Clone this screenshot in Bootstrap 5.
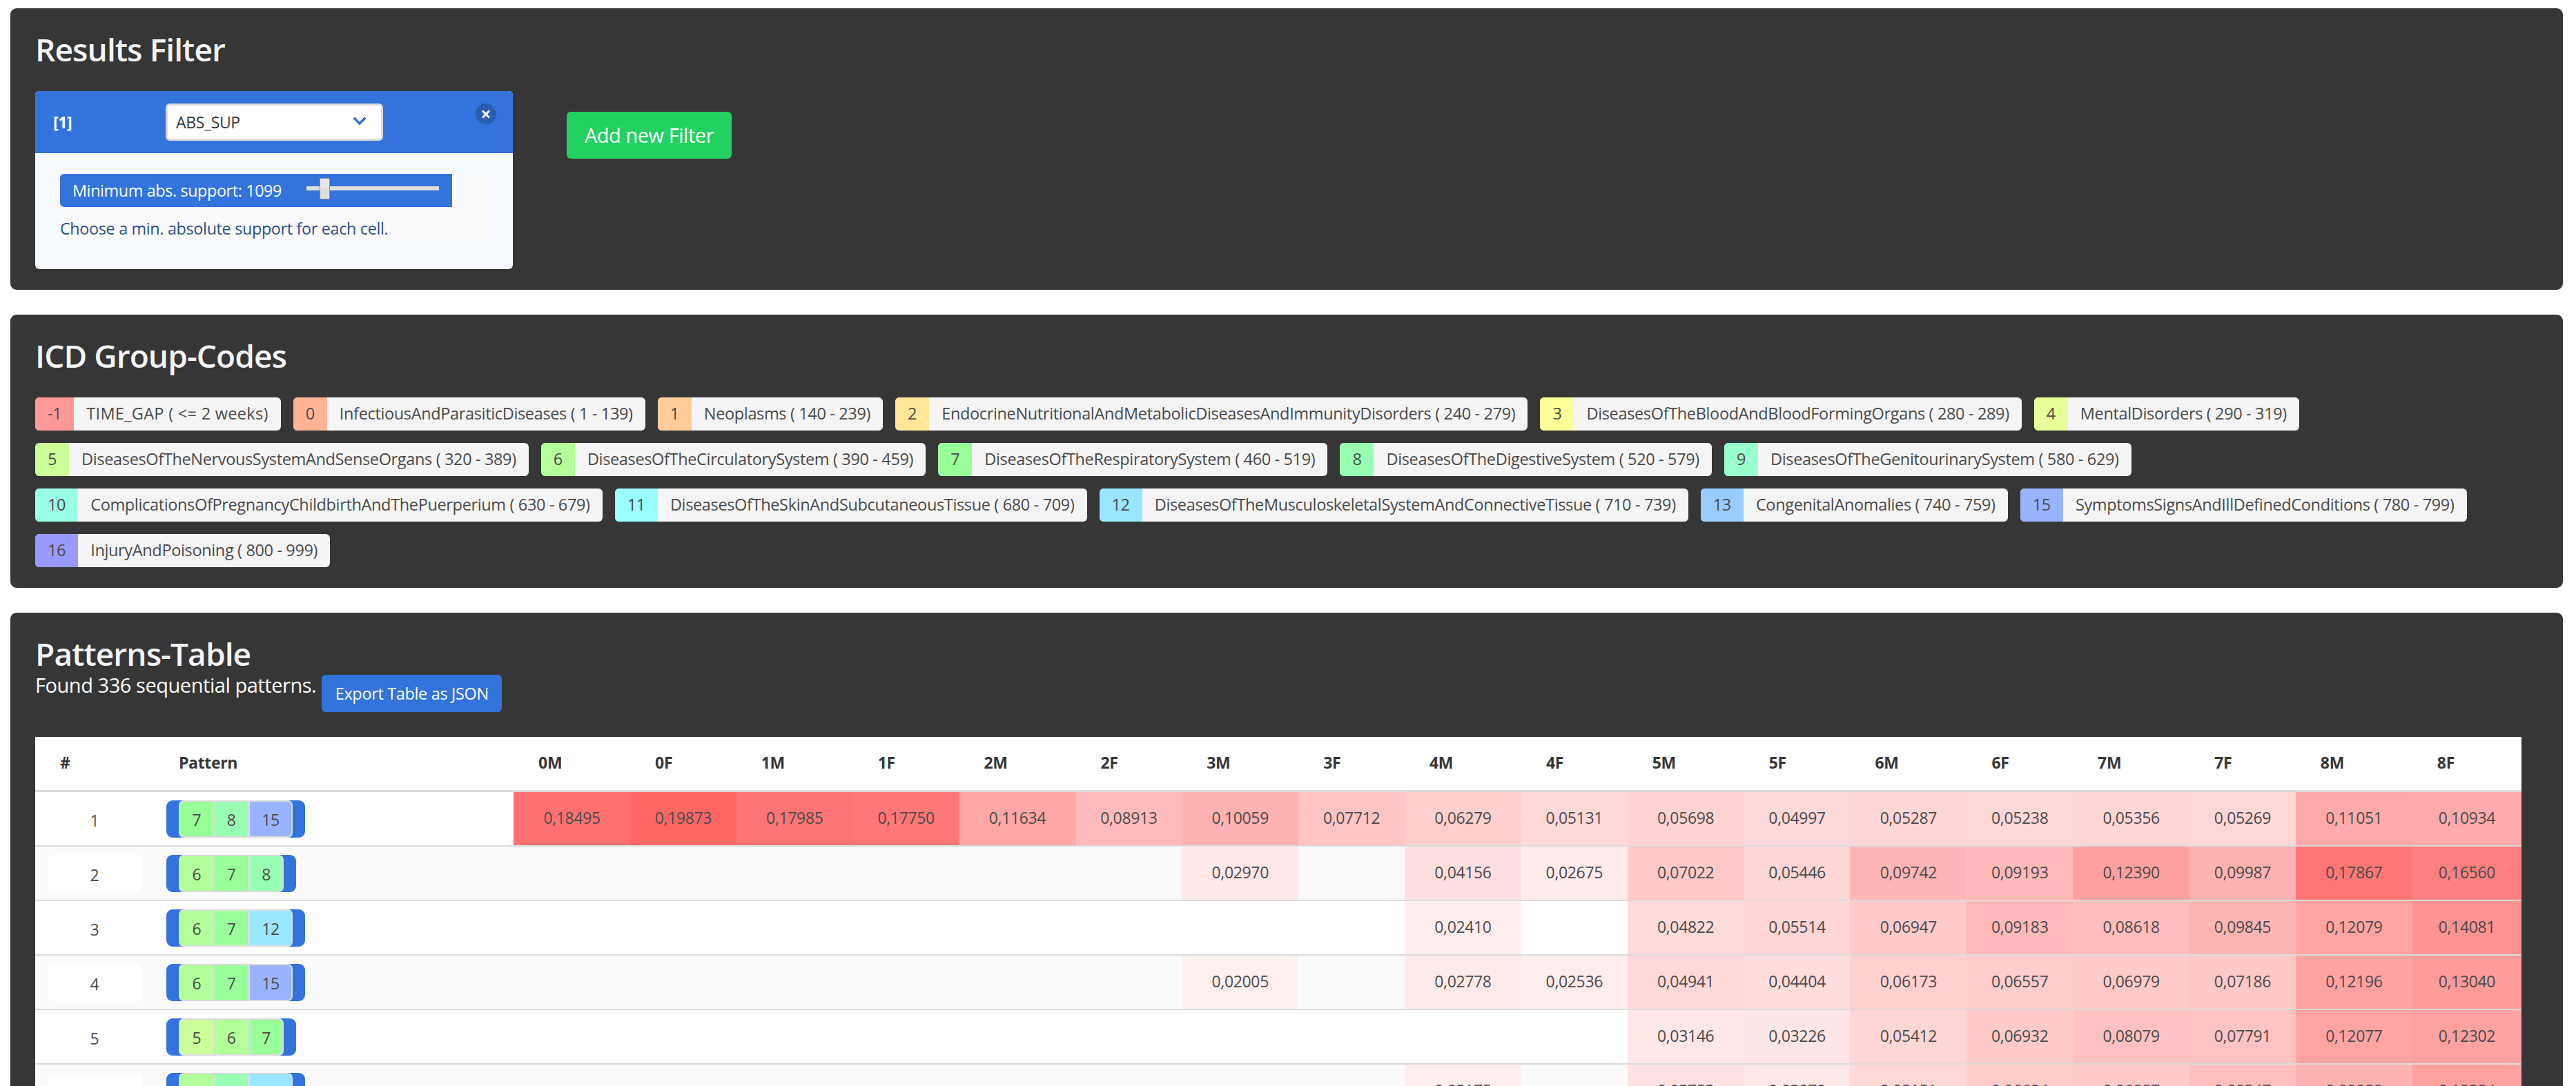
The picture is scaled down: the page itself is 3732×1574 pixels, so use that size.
<!DOCTYPE html>
<html lang="en">
<head>
<meta charset="utf-8">
<title>Results</title>
<link href="https://cdn.jsdelivr.net/npm/bootstrap@5.3.0/dist/css/bootstrap.min.css" rel="stylesheet">
<style>
html,body{height:1574px;overflow:hidden;background:#fff}
body{font-family:"Open Sans","Noto Sans",sans-serif;font-size:23px;letter-spacing:-.35px;color:#4a4a4a;padding:12px 19px 0 15px}
.dark-panel{background:#363636;border-radius:9px;padding:36px;margin-bottom:36px;color:#f5f5f5}
.panel-first{padding-bottom:30px;height:408px}
.panel-second{padding-bottom:30px;height:396px}
.panel-title{font-size:46px;font-weight:600;line-height:46px;height:54px;color:#f5f5f5;margin:0;letter-spacing:-.9px}
.filter-zone{margin-top:30px;gap:78px}
.filter-card{width:692px;height:258px;background:#f6f9fe;border-radius:6px;overflow:hidden;position:relative}
.filter-head{height:90px;background:#3273dc;color:#fff;font-weight:700;padding-left:26px}
.filter-id{width:163px}
.select-wrap{width:315px;height:54px;position:relative}
.select-wrap select{width:100%;height:100%;appearance:none;border:3px solid #dbdbdb;border-radius:6px;background:#fff;color:#363636;font:inherit;font-weight:400;padding:0 12px;letter-spacing:-.35px}
.select-wrap::after{content:"";position:absolute;right:27px;top:15px;width:14px;height:14px;border:4px solid #3273dc;border-top:0;border-right:0;transform:rotate(-45deg);border-radius:1px;pointer-events:none}
.close-dot{position:absolute;top:18px;right:24px;width:30px;height:30px;border-radius:50%;border:0;padding:0;background:#2a5cb0}
.close-dot::before,.close-dot::after{content:"";position:absolute;left:8px;top:13.5px;width:14px;height:3px;background:#fff}
.close-dot::before{transform:rotate(45deg)}
.close-dot::after{transform:rotate(-45deg)}
.filter-body{margin:30px 36px 0;background:#fafafa;border-radius:6px;height:96px}
.slider-bar{width:568px;height:48px;background:#3273dc;color:#fff;border-radius:6px 0 0 6px;padding-left:18px}
.slider-label{width:339px;white-space:nowrap;font-size:23.3px}
.slider-bar input{appearance:none;-webkit-appearance:none;width:192px;height:31px;background:transparent;margin:-6px 0 0;padding:0}
.slider-bar input::-webkit-slider-runnable-track{height:6px;background:#e0ded9}
.slider-bar input::-webkit-slider-thumb{-webkit-appearance:none;width:15px;height:31px;margin-top:-12.5px;background:linear-gradient(#ebe8e3 50%,#e2dfd9 50%);border:1.5px solid #8f8f8f;border-radius:1px}
.help-line{font-size:23.3px;color:#2b4f8c;line-height:62px;height:48px;letter-spacing:-.3px}
.add-btn{margin-top:30px;width:239px;height:68px;background:#23d160;border:0;border-radius:6px;color:#fff;font-size:29px;letter-spacing:-.45px;padding:0}
.code-wrap{margin-top:30px;gap:18px}
.code-pill{display:inline-flex;height:48px;line-height:46px;border-radius:6px;overflow:hidden;background:#f5f5f5;color:#4a4a4a;white-space:nowrap;font-size:23.5px}
.code-id{padding:0 18px}
.code-name{padding:0 18px}
.code-caps{letter-spacing:.3px}
.c-m1{background:#f99}.c-0{background:#ffb399}.c-1{background:#fc9}.c-2{background:#ffe699}.c-3{background:#ff9}.c-4{background:#e6ff99}.c-5{background:#cf9}.c-6{background:#b3ff99}.c-7{background:#9f9}.c-8{background:#99ffb3}.c-9{background:#9fc}.c-10{background:#99ffe6}.c-11{background:#9ff}.c-12{background:#99e6ff}.c-13{background:#9cf}.c-15{background:#99b3ff}.c-16{background:#99f}
.found-line{font-size:29px;line-height:54px;letter-spacing:-.45px;color:#fff;height:54px;gap:8px}
.found-line span{margin-top:-12px}
.export-btn{width:261px;height:54px;background:#3273dc;border:0;border-radius:6px;color:#fff;font-size:23.5px;letter-spacing:-.35px;padding:0}
.table-wrap{margin-top:36px;margin-right:24px;background:#fff}
.heat-table{table-layout:fixed;width:3602px;border-collapse:collapse;background:#fff;color:#4a4a4a}
.heat-table .w-num{width:172px}.heat-table .w-pat{width:521px}.heat-table .w-m{width:169px}.heat-table .w-f{width:153.7px}.heat-table .w-f:last-child{width:158px}
.heat-table th{height:78px;padding:0 0 3px 36px;border-bottom:3px solid #dbdbdb;color:#363636;font-weight:700;vertical-align:middle;text-align:left}
.heat-table td{height:79px;padding:12px 18px 11px;border-bottom:2px solid #dbdbdb;text-align:center;vertical-align:top;line-height:50px;white-space:nowrap;overflow:hidden}
.heat-table tbody tr:nth-child(even) td{background-color:#fafafa}
.num-box{height:54px;line-height:58px;border-radius:6px;background:#fff}
.seq-outer{display:inline-flex;height:54px;background:#3273dc;border-radius:9px;padding:0 18px;vertical-align:top}
.seq-inner{display:flex;border:2.5px solid #dbdbdb;border-radius:7px;overflow:hidden;background:#dbdbdb;gap:2.5px}
.seq-inner span{padding:0 17.5px;line-height:53px}
</style>
</head>
<body>

<section class="dark-panel panel-first">
  <h2 class="panel-title">Results Filter</h2>
  <div class="d-flex filter-zone">
    <div class="filter-card">
      <div class="d-flex align-items-center filter-head">
        <div class="filter-id">[1]</div>
        <div class="select-wrap"><select aria-label="Filter type"><option>ABS_SUP</option></select></div>
      </div>
      <button class="close-dot" aria-label="Close"></button>
      <div class="filter-body">
        <div class="d-flex align-items-center slider-bar">
          <div class="slider-label">Minimum abs. support: 1099</div>
          <input type="range" min="0" max="10270" value="1099" aria-label="Minimum abs. support">
        </div>
        <div class="help-line">Choose a min. absolute support for each cell.</div>
      </div>
    </div>
    <button class="add-btn">Add new Filter</button>
  </div>
</section>

<section class="dark-panel panel-second">
  <h2 class="panel-title">ICD Group-Codes</h2>
  <div class="d-flex flex-wrap code-wrap">
    <div class="code-pill"><span class="code-id c-m1">-1</span><span class="code-name code-caps">TIME_GAP ( &lt;= 2 weeks)</span></div>
    <div class="code-pill"><span class="code-id c-0">0</span><span class="code-name">InfectiousAndParasiticDiseases ( 1 - 139)</span></div>
    <div class="code-pill"><span class="code-id c-1">1</span><span class="code-name">Neoplasms ( 140 - 239)</span></div>
    <div class="code-pill"><span class="code-id c-2">2</span><span class="code-name">EndocrineNutritionalAndMetabolicDiseasesAndImmunityDisorders ( 240 - 279)</span></div>
    <div class="code-pill"><span class="code-id c-3">3</span><span class="code-name">DiseasesOfTheBloodAndBloodFormingOrgans ( 280 - 289)</span></div>
    <div class="code-pill"><span class="code-id c-4">4</span><span class="code-name">MentalDisorders ( 290 - 319)</span></div>
    <div class="code-pill"><span class="code-id c-5">5</span><span class="code-name">DiseasesOfTheNervousSystemAndSenseOrgans ( 320 - 389)</span></div>
    <div class="code-pill"><span class="code-id c-6">6</span><span class="code-name">DiseasesOfTheCirculatorySystem ( 390 - 459)</span></div>
    <div class="code-pill"><span class="code-id c-7">7</span><span class="code-name">DiseasesOfTheRespiratorySystem ( 460 - 519)</span></div>
    <div class="code-pill"><span class="code-id c-8">8</span><span class="code-name">DiseasesOfTheDigestiveSystem ( 520 - 579)</span></div>
    <div class="code-pill"><span class="code-id c-9">9</span><span class="code-name">DiseasesOfTheGenitourinarySystem ( 580 - 629)</span></div>
    <div class="code-pill"><span class="code-id c-10">10</span><span class="code-name">ComplicationsOfPregnancyChildbirthAndThePuerperium ( 630 - 679)</span></div>
    <div class="code-pill"><span class="code-id c-11">11</span><span class="code-name">DiseasesOfTheSkinAndSubcutaneousTissue ( 680 - 709)</span></div>
    <div class="code-pill"><span class="code-id c-12">12</span><span class="code-name">DiseasesOfTheMusculoskeletalSystemAndConnectiveTissue ( 710 - 739)</span></div>
    <div class="code-pill"><span class="code-id c-13">13</span><span class="code-name">CongenitalAnomalies ( 740 - 759)</span></div>
    <div class="code-pill"><span class="code-id c-15">15</span><span class="code-name">SymptomsSignsAndIllDefinedConditions ( 780 - 799)</span></div>
    <div class="code-pill"><span class="code-id c-16">16</span><span class="code-name">InjuryAndPoisoning ( 800 - 999)</span></div>
  </div>
</section>

<section class="dark-panel">
  <h2 class="panel-title">Patterns-Table</h2>
  <div class="d-flex found-line"><span>Found 336 sequential patterns.</span><button class="export-btn">Export Table as JSON</button></div>
  <div class="table-wrap">
    <table class="heat-table" id="heat"></table>
  </div>
</section>

<script>
var data=[
["1",[7,8,15],["0,18495","0,19873","0,17985","0,17750","0,11634","0,08913","0,10059","0,07712","0,06279","0,05131","0,05698","0,04997","0,05287","0,05238","0,05356","0,05269","0,11051","0,10934"]],
["2",[6,7,8],["","","","","","","0,02970","","0,04156","0,02675","0,07022","0,05446","0,09742","0,09193","0,12390","0,09987","0,17867","0,16560"]],
["3",[6,7,12],["","","","","","","","","0,02410","","0,04822","0,05514","0,06947","0,09183","0,08618","0,09845","0,12079","0,14081"]],
["4",[6,7,15],["","","","","","","0,02005","","0,02778","0,02536","0,04941","0,04404","0,06173","0,06557","0,06979","0,07186","0,12196","0,13040"]],
["5",[5,6,7],["","","","","","","","","","","0,03146","0,03226","0,05412","0,06932","0,08079","0,07791","0,12077","0,12302"]],
["6",[6,8,12],["","","","","","","","","0,02175","","0,03753","0,03079","0,05151","0,06694","0,06887","0,08347","0,09989","0,12284"]]
];
var h='<colgroup><col class="w-num"><col class="w-pat">';
var heads=[];
for(var i=0;i<9;i++){heads.push(i+'M',i+'F');h+='<col class="w-m"><col class="w-f">';}
h+='</colgroup><thead><tr><th>#</th><th>Pattern</th>'+heads.map(function(x){return '<th>'+x+'</th>';}).join('')+'</tr></thead><tbody>';
data.forEach(function(r){
  h+='<tr><td><div class="num-box">'+r[0]+'</div></td><td class="text-start"><div class="seq-outer"><div class="seq-inner">'+r[1].map(function(c){return '<span class="c-'+c+'">'+c+'</span>';}).join('')+'</div></div></td>';
  r[2].forEach(function(v){
    var a=v?(parseFloat(v.replace(',','.'))*3).toFixed(3):0;
    h+=v?'<td style="background-color:rgba(255,0,0,'+a+')">'+v+'</td>':'<td></td>';
  });
  h+='</tr>';
});
document.getElementById('heat').innerHTML=h+'</tbody>';
</script>
<script src="https://cdn.jsdelivr.net/npm/bootstrap@5.3.0/dist/js/bootstrap.bundle.min.js"></script>
</body>
</html>
